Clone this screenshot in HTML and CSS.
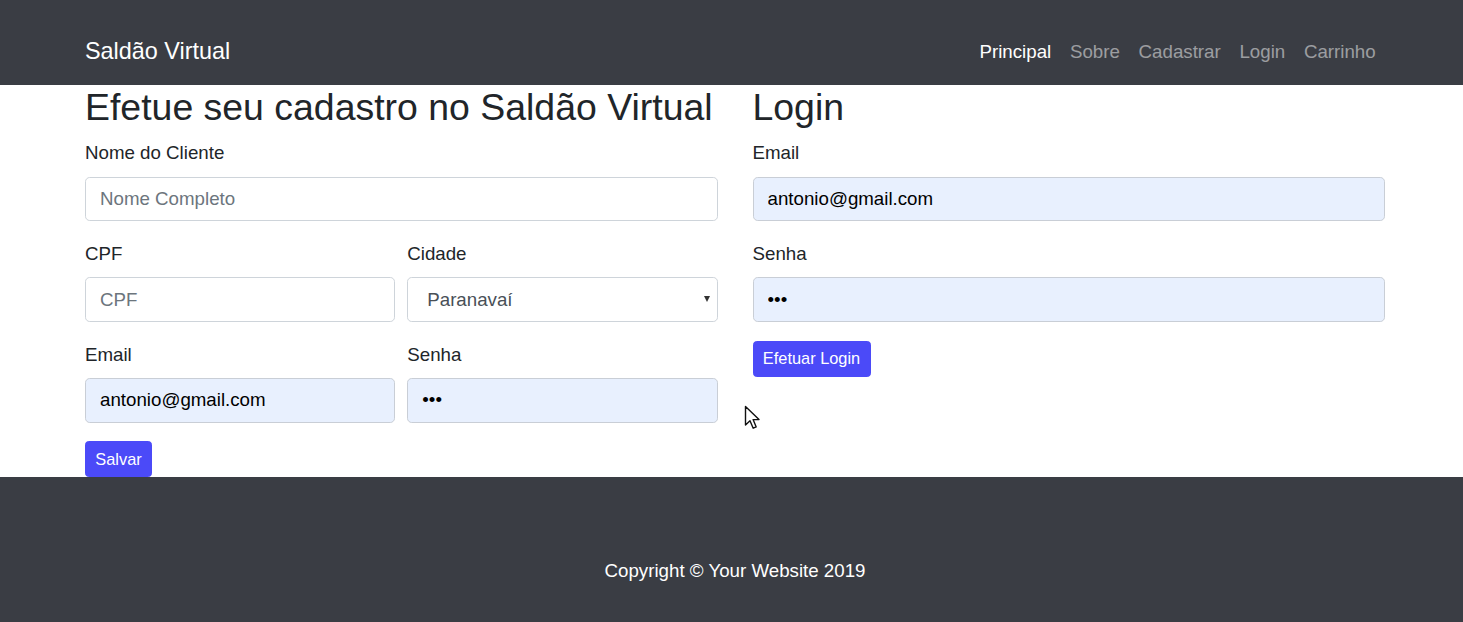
FILE: index.html
```html
<!DOCTYPE html>
<html lang="pt-BR">
<head>
<meta charset="utf-8">
<title>Saldão Virtual</title>
<link rel="stylesheet" href="styles.css">
</head>
<body>
<nav class="navbar">
  <div class="container nav-inner">
    <a class="brand" href="#">Saldão Virtual</a>
    <ul class="nav-links">
      <li><a class="active" href="#">Principal</a></li>
      <li><a href="#">Sobre</a></li>
      <li><a href="#">Cadastrar</a></li>
      <li><a href="#">Login</a></li>
      <li><a href="#">Carrinho</a></li>
    </ul>
  </div>
</nav>

<main class="container main">
  <section class="col">
    <h2 class="title">Efetue seu cadastro no Saldão Virtual</h2>
    <form class="form">
      <div class="form-group">
        <label class="label">Nome do Cliente</label>
        <input class="control" type="text" placeholder="Nome Completo">
      </div>
      <div class="form-row">
        <div class="form-group">
          <label class="label">CPF</label>
          <input class="control" type="text" placeholder="CPF">
        </div>
        <div class="form-group">
          <label class="label">Cidade</label>
          <div class="select-wrap">
            <select class="control select">
              <option>Paranavaí</option>
            </select>
          </div>
        </div>
      </div>
      <div class="form-row">
        <div class="form-group">
          <label class="label">Email</label>
          <input class="control filled" type="text" value="antonio@gmail.com">
        </div>
        <div class="form-group">
          <label class="label">Senha</label>
          <input class="control filled" type="password" value="abc">
        </div>
      </div>
      <button class="btn" type="button">Salvar</button>
    </form>
  </section>

  <section class="col">
    <h2 class="title">Login</h2>
    <form class="form">
      <div class="form-group">
        <label class="label">Email</label>
        <input class="control filled" type="text" value="antonio@gmail.com">
      </div>
      <div class="form-group">
        <label class="label">Senha</label>
        <input class="control filled" type="password" value="abc">
      </div>
      <button class="btn" type="button">Efetuar Login</button>
    </form>
  </section>
</main>

<footer class="footer">
  <div class="container">
    <p class="copy">Copyright © Your Website 2019</p>
  </div>
</footer>

<svg class="cursor" width="17" height="26" viewBox="0 0 17 26" aria-hidden="true">
  <path d="M1.5 1.5 L1.5 20 L6 15.8 L9.2 23.2 L12.2 21.9 L9.1 14.6 L15 14.6 Z" fill="#fff" stroke="#111" stroke-width="1.4" stroke-linejoin="round"/>
</svg>
</body>
</html>
```

FILE: styles.css
```css
html {
  font-size: 18.72px;
}

body {
  margin: 0;
  font-family: "Liberation Sans", Arial, sans-serif;
  font-size: 1rem;
  line-height: 1.5;
  color: #212529;
  background: #fff;
}

.container {
  width: 1300px;
  margin-left: 85px;
}

/* Navbar */
.navbar {
  background: #3a3d44;
  height: 85px;
  box-sizing: border-box;
  padding-top: 19px;
}

.nav-inner {
  display: flex;
  align-items: center;
  justify-content: space-between;
  height: 66px;
}

.brand {
  font-size: 1.25rem;
  color: #fff;
  text-decoration: none;
  line-height: 1.5;
}

.nav-links {
  display: flex;
  list-style: none;
  margin: 0;
  padding: 0;
}

.nav-links a {
  display: block;
  padding: 0.5rem 0.5rem;
  color: rgba(255, 255, 255, 0.5);
  text-decoration: none;
}

.nav-links a.active {
  color: #fff;
}

/* Main */
.main {
  display: grid;
  grid-template-columns: 1fr 1fr;
  column-gap: 35px;
}

.title {
  margin: 0 0 0.5rem;
  font-size: 2rem;
  font-weight: 500;
  line-height: 1.2;
}

.form {
  margin: 0;
}

.form-group {
  margin-bottom: 1rem;
}

.form-row {
  display: grid;
  grid-template-columns: 1fr 1fr;
  column-gap: 12px;
}

.label {
  display: inline-block;
  margin-bottom: 0.5rem;
}

.control {
  display: block;
  width: 100%;
  box-sizing: border-box;
  height: 44.5px;
  padding: 0.375rem 0.75rem;
  font-family: inherit;
  font-size: 1rem;
  line-height: 1.5;
  color: #495057;
  background: #fff;
  border: 1px solid #ced4da;
  border-radius: 4.7px;
}

.control::placeholder {
  color: #6c757d;
}

.control.filled {
  background: #e8f0fe;
  color: #000;
  border-color: #c9ced6;
}

.select-wrap {
  position: relative;
}

.select {
  appearance: none;
  -webkit-appearance: none;
  padding-left: 19px;
}

.select-wrap::after {
  content: "";
  position: absolute;
  right: 8px;
  top: 19px;
  border-left: 3.5px solid transparent;
  border-right: 3.5px solid transparent;
  border-top: 6px solid #333;
}

.btn {
  display: inline-block;
  font-family: inherit;
  font-size: 0.875rem;
  line-height: 1.5;
  padding: 0.25rem 0.5rem;
  color: #fff;
  background: #4b4af8;
  border: 1px solid #4b4af8;
  border-radius: 3.7px;
  cursor: pointer;
  height: 36px;
}

/* Footer */
.footer {
  background: #3a3d44;
  padding: 80px 0 37px;
}

.copy {
  margin: 0;
  text-align: center;
  color: #fff;
}

.cursor {
  position: absolute;
  left: 744px;
  top: 405px;
}
```
